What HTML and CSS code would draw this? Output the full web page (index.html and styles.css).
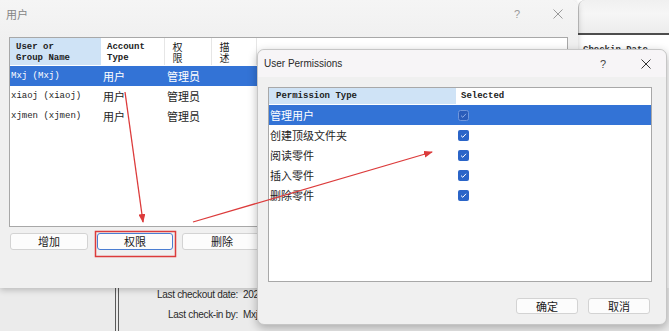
FILE: index.html
```html
<!DOCTYPE html>
<html lang="zh-CN">

<head>
    <meta charset="UTF-8">
    <meta name="viewport" content="width=device-width, initial-scale=1.0">
    <title>用户权限</title>
    <link rel="stylesheet" href="styles.css">
</head>

<body>
    <!-- Background application (mostly hidden behind the dialogs) -->
    <div class="app-tab">
        <div class="tab-shape"></div>
        <div class="tab-line"></div>
        <div class="col-head">Checkin Date</div>
    </div>

    <div class="app-bottom">
        <div class="pane-left"></div>
        <div class="split"></div>
        <div class="info">
            <div class="info-row"><span class="info-label">Last checkout date:</span><span class="info-value">2023/5/12</span></div>
            <div class="info-row"><span class="info-label">Last check-in by:</span><span class="info-value">Mxj</span></div>
        </div>
    </div>

    <!-- Users dialog -->
    <div class="dialog users">
        <div class="titlebar">
            <span class="title">用户</span>
            <span class="tb-help">?</span>
            <svg class="tb-close" width="10" height="10" viewBox="0 0 10 10">
                <path d="M0.5 0.5 L9.5 9.5 M9.5 0.5 L0.5 9.5" stroke="#9a9a9a" stroke-width="1" />
            </svg>
        </div>

        <div class="listbox user-list">
            <div class="lb-head">
                <div class="hcell name-col">User or<br>Group Name</div>
                <div class="hcell">Account<br>Type</div>
                <div class="hcell cjk-head"><span>权限</span></div>
                <div class="hcell cjk-head"><span>描述</span></div>
            </div>
            <div class="lb-row selected">
                <div class="cell mono">Mxj (Mxj)</div>
                <div class="cell">用户</div>
                <div class="cell">管理员</div>
                <div class="cell"></div>
            </div>
            <div class="lb-row">
                <div class="cell mono">xiaoj (xiaoj)</div>
                <div class="cell">用户</div>
                <div class="cell">管理员</div>
                <div class="cell"></div>
            </div>
            <div class="lb-row">
                <div class="cell mono">xjmen (xjmen)</div>
                <div class="cell">用户</div>
                <div class="cell">管理员</div>
                <div class="cell"></div>
            </div>
        </div>

        <div class="btn-row">
            <button class="btn btn-add">增加</button>
            <button class="btn btn-perm focused">权限</button>
            <button class="btn btn-del">删除</button>
        </div>
    </div>

    <!-- User Permissions dialog -->
    <div class="dialog perms">
        <div class="titlebar">
            <span class="title">User Permissions</span>
            <span class="tb-help">?</span>
            <svg class="tb-close" width="10" height="10" viewBox="0 0 10 10">
                <path d="M0.5 0.5 L9.5 9.5 M9.5 0.5 L0.5 9.5" stroke="#333" stroke-width="1" />
            </svg>
        </div>

        <div class="listbox perm-list">
            <div class="lb-head">
                <div class="hcell name-col">Permission Type</div>
                <div class="hcell">Selected</div>
            </div>
            <div class="lb-row selected">
                <div class="cell">管理用户</div>
                <div class="cell check-cell">
                    <svg width="11" height="11" viewBox="0 0 11 11">
                        <rect x="0.5" y="0.5" width="10" height="10" rx="2" fill="#2a5cba" stroke="#6f97dd" />
                        <path d="M3 5.6 L4.8 7.3 L8 3.8" fill="none" stroke="#8cabe6" stroke-width="1" />
                    </svg>
                </div>
            </div>
            <div class="lb-row">
                <div class="cell">创建顶级文件夹</div>
                <div class="cell check-cell">
                    <svg width="11" height="11" viewBox="0 0 11 11">
                        <rect x="0" y="0" width="11" height="11" rx="2" fill="#2b65c8" />
                        <path d="M3 5.6 L4.8 7.3 L8 3.8" fill="none" stroke="#fff" stroke-width="1" />
                    </svg>
                </div>
            </div>
            <div class="lb-row">
                <div class="cell">阅读零件</div>
                <div class="cell check-cell">
                    <svg width="11" height="11" viewBox="0 0 11 11">
                        <rect x="0" y="0" width="11" height="11" rx="2" fill="#2b65c8" />
                        <path d="M3 5.6 L4.8 7.3 L8 3.8" fill="none" stroke="#fff" stroke-width="1" />
                    </svg>
                </div>
            </div>
            <div class="lb-row">
                <div class="cell">插入零件</div>
                <div class="cell check-cell">
                    <svg width="11" height="11" viewBox="0 0 11 11">
                        <rect x="0" y="0" width="11" height="11" rx="2" fill="#2b65c8" />
                        <path d="M3 5.6 L4.8 7.3 L8 3.8" fill="none" stroke="#fff" stroke-width="1" />
                    </svg>
                </div>
            </div>
            <div class="lb-row">
                <div class="cell">删除零件</div>
                <div class="cell check-cell">
                    <svg width="11" height="11" viewBox="0 0 11 11">
                        <rect x="0" y="0" width="11" height="11" rx="2" fill="#2b65c8" />
                        <path d="M3 5.6 L4.8 7.3 L8 3.8" fill="none" stroke="#fff" stroke-width="1" />
                    </svg>
                </div>
            </div>
        </div>

        <div class="btn-row">
            <button class="btn">确定</button>
            <button class="btn">取消</button>
        </div>
    </div>

    <!-- Red annotation arrows drawn over the screenshot -->
    <svg class="annot" width="669" height="331" viewBox="0 0 669 331">
        <defs>
            <marker id="head" markerWidth="9" markerHeight="7" refX="8" refY="3.5" orient="auto" markerUnits="userSpaceOnUse">
                <path d="M0 0 L9 3.5 L0 7 Z" fill="#dc3b3b" />
            </marker>
        </defs>
        <line x1="125" y1="92" x2="143" y2="222" stroke="#dc3b3b" stroke-width="1.3" marker-end="url(#head)" />
        <line x1="193" y1="222" x2="432" y2="152" stroke="#dc3b3b" stroke-width="1.3" marker-end="url(#head)" />
        <rect x="95.5" y="231.5" width="80" height="25" fill="none" stroke="#dc3b3b" stroke-width="1.5" />
    </svg>
</body>

</html>
```

FILE: styles.css
```css
* {
    box-sizing: border-box;
}

body {
    margin: 0;
    width: 669px;
    height: 331px;
    position: relative;
    overflow: hidden;
    background-color: #fbfbfb;
    font-family: "Liberation Sans", "Noto Sans CJK SC", sans-serif;
    font-size: 11px;
    color: #1e1e1e;
}

/* background app */

.app-tab {
    position: absolute;
    left: 577px;
    top: 0;
    width: 92px;
    height: 60px;
    background-color: #fff;
}

.tab-shape {
    height: 33px;
    margin-left: 1px;
    background: linear-gradient(#f0f0f0, #f6f6f6 40%, #ececec);
    border-left: 1px solid #c4c4c4;
    border-top-left-radius: 7px;
}

.tab-line {
    height: 2px;
    background-color: #4d4d4d;
}

.col-head {
    padding: 10px 0 0 6px;
    font-family: "Liberation Mono", monospace;
    font-weight: bold;
    font-size: 9px;
    line-height: 11px;
    color: #333;
}

.app-bottom {
    position: absolute;
    left: 0;
    top: 288px;
    width: 669px;
    height: 43px;
    display: flex;
    background-color: #ebebeb;
}

.pane-left {
    width: 115px;
}

.split {
    width: 4px;
    border-left: 1px solid #5a5a5a;
    border-right: 1px solid #5a5a5a;
}

.info {
    display: flex;
    flex-direction: column;
    gap: 6px;
}

.info-row {
    display: flex;
    gap: 5px;
    line-height: 14px;
    font-size: 10px;
    letter-spacing: -0.3px;
    color: #2a2a2a;
}

.info-label {
    width: 119px;
    text-align: right;
}

/* dialogs */

.dialog {
    position: absolute;
    display: flex;
    flex-direction: column;
    background-color: #f0f0f0;
}

.users {
    left: 0;
    top: 0;
    width: 578px;
    height: 288px;
    border-radius: 0 8px 8px 0;
    box-shadow: 0 2px 6px rgba(0, 0, 0, 0.22);
    background: linear-gradient(#f5f5f5, #f0f0f0 40px);
}

.perms {
    left: 257px;
    top: 49px;
    width: 410px;
    height: 276px;
    border: 1px solid #c6c6c6;
    border-radius: 7px;
    box-shadow: 0 3px 10px rgba(0, 0, 0, 0.28);
}

.titlebar {
    display: flex;
    align-items: center;
    flex-shrink: 0;
}

.users .titlebar {
    height: 28px;
    padding: 0 15px 0 6px;
}

.users .title {
    color: #858585;
    font-size: 11px;
}

.users .tb-help {
    margin-left: auto;
    margin-right: 33px;
    color: #9a9a9a;
}

.perms .titlebar {
    height: 27px;
    padding: 0 15px 0 6px;
    background-color: #f7f5f7;
    border-radius: 7px 7px 0 0;
}

.perms .title {
    font-size: 10px;
    color: #2a2a2a;
}

.perms .tb-help {
    margin-left: auto;
    margin-right: 35px;
    color: #444;
}

.tb-help {
    font-size: 11px;
}

/* list boxes */

.listbox {
    background-color: #fff;
    border: 1px solid #a8a8a8;
    flex-shrink: 0;
}

.lb-head,
.lb-row {
    display: grid;
}

.user-list {
    margin: 9px 0 0 9px;
    width: 559px;
    height: 190px;
}

.user-list .lb-head,
.user-list .lb-row {
    grid-template-columns: 91px 64px 47px 45px;
}

.user-list .lb-head {
    height: 27px;
    margin-bottom: 1px;
}

.perm-list {
    margin: 10px 0 0 10px;
    width: 384px;
    height: 195px;
}

.perm-list .lb-head,
.perm-list .lb-row {
    grid-template-columns: 187px 1fr;
}

.perm-list .lb-head {
    height: 16px;
    margin-bottom: 1px;
}

.hcell {
    font-family: "Liberation Mono", monospace;
    font-weight: bold;
    font-size: 9px;
    line-height: 11px;
    color: #222;
    padding: 4px 0 0 6px;
    border-right: 1px solid #e6e6e6;
}

.hcell.name-col {
    background-color: #cfe3f6;
    border-right: none;
}

.hcell.cjk-head {
    font-family: "Noto Sans CJK SC", sans-serif;
    font-weight: normal;
    font-size: 10px;
    padding: 4px 0 0 6px;
}

.cjk-head span {
    display: block;
    writing-mode: vertical-lr;
    letter-spacing: 1px;
    line-height: 12px;
}

.perm-list .hcell {
    line-height: 16px;
    padding: 0 0 0 7px;
    border-right: none;
}

.perm-list .hcell + .hcell {
    padding-left: 5px;
}

.lb-row {
    height: 20px;
    align-items: center;
}

.lb-row.selected {
    background-color: #3373d6;
    color: #fff;
}

.cell {
    padding-left: 2px;
    font-family: "Noto Sans CJK SC", sans-serif;
    font-size: 11px;
    line-height: 20px;
    white-space: nowrap;
}

.cell.mono {
    font-family: "Liberation Mono", monospace;
    font-size: 9px;
    padding-left: 1px;
}

.perm-list .cell {
    padding-left: 1px;
}

.check-cell {
    display: flex;
    align-items: center;
    height: 20px;
}

.perm-list .check-cell {
    padding-left: 2px;
}

/* buttons */

.btn-row {
    display: flex;
}

.users .btn-row {
    margin-top: 6px;
    padding-left: 10px;
    gap: 9px;
}

.perms .btn-row {
    margin-top: 16px;
    padding-right: 16px;
    justify-content: flex-end;
    gap: 10px;
}

.btn {
    height: 17px;
    padding: 0;
    font-family: "Noto Sans CJK SC", sans-serif;
    font-size: 11px;
    line-height: 15px;
    color: #1a1a1a;
    background-color: #fcfcfc;
    border: 1px solid #d3d3d3;
    border-radius: 3px;
}

.btn-add {
    width: 78px;
}

.btn-perm {
    width: 76px;
}

.btn-del {
    width: 80px;
}

.btn.focused {
    border-color: #4a7dd2;
}

.perms .btn {
    width: 62px;
    height: 16px;
}

/* annotations */

.annot {
    position: absolute;
    left: 0;
    top: 0;
    pointer-events: none;
}
```
